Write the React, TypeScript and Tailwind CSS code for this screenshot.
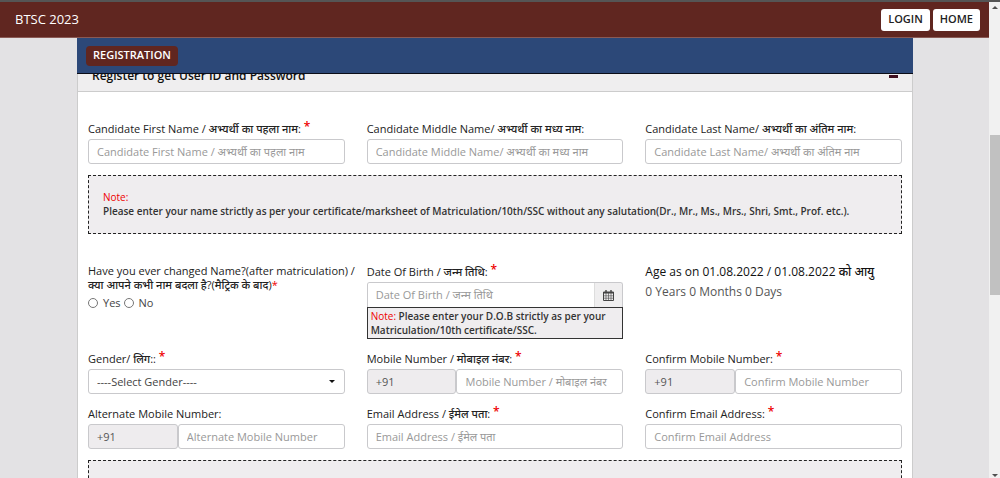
import React, { useState } from 'react';

const inputClass =
  'block h-[25px] w-full min-w-0 rounded-[3px] border border-[#c9c9cc] bg-white px-2 text-[11px] leading-4 text-[#444] placeholder:text-[#999] outline-none focus:border-[#66afe9]';

interface LabelProps {
  id: string;
  text: string;
  required?: boolean;
}

const Star: React.FC = () => (
  <span className="align-[2px] text-[12px] leading-none font-semibold text-[#e00]">*</span>
);

const Label: React.FC<LabelProps> = ({ id, text, required }) => (
  <label htmlFor={id} className="block h-[18px] text-[11px] font-medium leading-4 whitespace-nowrap text-[#222]">
    {text} {required && <Star />}
  </label>
);

interface FieldProps extends LabelProps {
  placeholder: string;
  type?: string;
}

const Field: React.FC<FieldProps> = ({ id, text, required, placeholder, type = 'text' }) => (
  <div className="min-w-0">
    <Label id={id} text={text} required={required} />
    <input id={id} type={type} placeholder={placeholder} className={inputClass} />
  </div>
);

const PhoneField: React.FC<FieldProps> = ({ id, text, required, placeholder }) => (
  <div className="min-w-0">
    <Label id={id} text={text} required={required} />
    <div className="flex">
      <input
        aria-label="Country code"
        value="+91"
        readOnly
        className="h-[25px] w-[35%] rounded-[3px] border border-[#c9c9cc] bg-[#eeecee] px-2 text-[11px] leading-4 text-[#555] outline-none"
      />
      <div className="min-w-0 flex-1">
        <input id={id} type="tel" placeholder={placeholder} className={inputClass} />
      </div>
    </div>
  </div>
);

const CalendarIcon: React.FC = () => (
  <svg viewBox="0 0 11 11" className="h-[11px] w-[11px]" fill="none" stroke="#444">
    <path d="M3 0v3M8 0v3" strokeWidth="1.4" />
    <path d="M.5 2h10v8.5H.5z" strokeWidth="1" />
    <path d="M.5 2.7h10" strokeWidth="1.6" />
    <path d="M3 3v7.5M5.5 3v7.5M8 3v7.5M.5 5.8h10M.5 8.2h10" strokeWidth=".6" />
  </svg>
);

const Scrollbar: React.FC = () => (
  <div className="flex w-[11px] shrink-0 flex-col items-center bg-[#f1f1f1]">
    <svg viewBox="0 0 11 14" className="h-[14px] w-[11px]" fill="#505050">
      <path d="M3 7h6L6 4z" />
    </svg>
    <div className="flex-[119]" />
    <div className="ml-px w-full flex-[160] bg-[#c1c1c1]" />
    <div className="flex-[173]" />
    <svg viewBox="0 0 11 10" className="h-[10px] w-[11px]" fill="#505050">
      <path d="M3 6h6L6 9z" />
    </svg>
  </div>
);

const App: React.FC = () => {
  const [gender, setGender] = useState<string>('');
  const [changed, setChanged] = useState<string>('');

  return (
    <div
      className="flex h-screen overflow-hidden border-t-2 border-[#555] bg-[#e3e2e4] text-[#333]"
      style={{ fontFamily: '"Open Sans", "Noto Sans", sans-serif' }}
    >
      <div className="flex min-w-0 flex-1 flex-col">
        {/* Header */}
        <header className="flex h-9 shrink-0 items-center justify-between border-b border-[#8a5a55] bg-[#602620] pr-[9px] pl-[15px]">
          <span className="text-[13px] text-white">BTSC 2023</span>
          <div className="flex gap-[3px]">
            <button className="h-[22px] rounded-[3px] bg-white px-[7px] text-[11px] font-semibold text-[#222]">LOGIN</button>
            <button className="h-[22px] rounded-[3px] bg-white px-[7px] text-[11px] font-semibold text-[#222]">HOME</button>
          </div>
        </header>

        <main className="mr-[76px] ml-[77px] flex min-h-0 flex-1 flex-col">
          {/* Nav */}
          <nav className="relative z-10 flex h-9 shrink-0 items-center border-b border-[#0a0d18] bg-[#2c4878] px-[9px]">
            <a href="#registration" className="flex h-5 items-center rounded-sm bg-[#602620] px-[7px] text-[11px] font-semibold text-white">
              REGISTRATION
            </a>
          </nav>

          {/* Title bar, scrolled partly under the nav */}
          <div className="-mt-[14px] flex h-8 shrink-0 items-center justify-between border border-[#ccc] bg-[#efeeef] px-[14px]">
            <h1 className="text-[12px] font-semibold text-[#111]">Register to get User ID and Password</h1>
            <button aria-label="Collapse" className="flex h-4 w-[9px] items-center">
              <span className="h-[3px] w-full bg-[#401020]" />
            </button>
          </div>

          <form className="flex-1 border-x border-[#ccc] bg-white px-[10px] pt-[29px]">
            <div className="grid grid-cols-3 gap-x-[22px]">
              <Field id="first" text="Candidate First Name / अभ्यर्थी का पहला नाम:" required placeholder="Candidate First Name / अभ्यर्थी का पहला नाम" />
              <Field id="middle" text="Candidate Middle Name/ अभ्यर्थी का मध्य नाम:" placeholder="Candidate Middle Name/ अभ्यर्थी का मध्य नाम" />
              <Field id="last" text="Candidate Last Name/ अभ्यर्थी का अंतिम नाम:" placeholder="Candidate Last Name/ अभ्यर्थी का अंतिम नाम" />
            </div>

            <div className="mt-[11px] mb-[30px] h-[59px] border border-dashed border-[#222] bg-[#efedef] px-[14px] pt-[14px] text-[10px] leading-[14px]">
              <p className="text-[#e00]">Note:</p>
              <p className="font-semibold">
                Please enter your name strictly as per your certificate/marksheet of Matriculation/10th/SSC without any salutation(Dr., Mr., Ms., Mrs., Shri, Smt., Prof. etc.).
              </p>
            </div>

            <div className="grid grid-cols-3 gap-x-[22px] gap-y-3">
              <fieldset className="min-w-0">
                <legend className="text-[11px] leading-[14px] font-medium whitespace-nowrap text-[#222]">
                  Have you ever changed Name?(after matriculation) /<br />
                  क्या आपने कभी नाम बदला है?(मैट्रिक के बाद)
                  <span className="text-[#e00]">*</span>
                </legend>
                <div className="mt-[3px] flex items-center text-[11px] leading-4 text-[#444]">
                  {['Yes', 'No'].map((option) => (
                    <label key={option} className="mr-[3px] flex items-center gap-[5px]">
                      <input
                        type="radio"
                        name="changed"
                        className="h-[10px] w-[10px]"
                        checked={changed === option}
                        onChange={() => setChanged(option)}
                      />
                      {option}
                    </label>
                  ))}
                </div>
              </fieldset>

              <div className="min-w-0">
                <Label id="dob" text="Date Of Birth / जन्म तिथि:" required />
                <div className="flex h-[25px] overflow-hidden rounded-t-[3px] border border-b-0 border-[#c9c9cc]">
                  <input
                    id="dob"
                    placeholder="Date Of Birth / जन्म तिथि"
                    className="min-w-0 flex-1 bg-white px-2 text-[11px] leading-4 placeholder:text-[#999] outline-none"
                  />
                  <button type="button" aria-label="Pick a date" className="flex w-7 items-center justify-center border-l border-[#ddd] bg-[#efeeef]">
                    <CalendarIcon />
                  </button>
                </div>
                <p className="border border-[#333] bg-[#efedef] px-[3px] py-px text-[10px] leading-[14px] font-semibold">
                  <span className="font-normal text-[#e00]">Note:</span> Please enter your D.O.B strictly as per your Matriculation/10th certificate/SSC.
                </p>
              </div>

              <div className="min-w-0 text-[12px] leading-4">
                <p className="font-medium whitespace-nowrap text-[#111]">Age as on 01.08.2022 / 01.08.2022 को आयु</p>
                <p className="mt-1 text-[#555]">0 Years 0 Months 0 Days</p>
              </div>

              <div className="min-w-0">
                <Label id="gender" text="Gender/ लिंग::" required />
                <div className="relative">
                  <select id="gender" value={gender} onChange={(e) => setGender(e.target.value)} className={`${inputClass} appearance-none`}>
                    <option value="">----Select Gender----</option>
                    <option value="male">Male</option>
                    <option value="female">Female</option>
                  </select>
                  <svg viewBox="0 0 6 3" className="pointer-events-none absolute top-[11px] right-[10px] h-[3px] w-[6px]" fill="#111">
                    <path d="M0 0h6L3 3z" />
                  </svg>
                </div>
              </div>
              <PhoneField id="mobile" text="Mobile Number / मोबाइल नंबर:" required placeholder="Mobile Number / मोबाइल नंबर" />
              <PhoneField id="mobile2" text="Confirm Mobile Number:" required placeholder="Confirm Mobile Number" />

              <PhoneField id="alternate" text="Alternate Mobile Number:" placeholder="Alternate Mobile Number" />
              <Field id="email" type="email" text="Email Address / ईमेल पता:" required placeholder="Email Address / ईमेल पता" />
              <Field id="email2" type="email" text="Confirm Email Address:" required placeholder="Confirm Email Address" />
            </div>

            <div className="mt-[11px] h-[59px] border border-dashed border-[#222] bg-[#efedef]" />
          </form>
        </main>
      </div>
      <Scrollbar />
    </div>
  );
};

export default App;
